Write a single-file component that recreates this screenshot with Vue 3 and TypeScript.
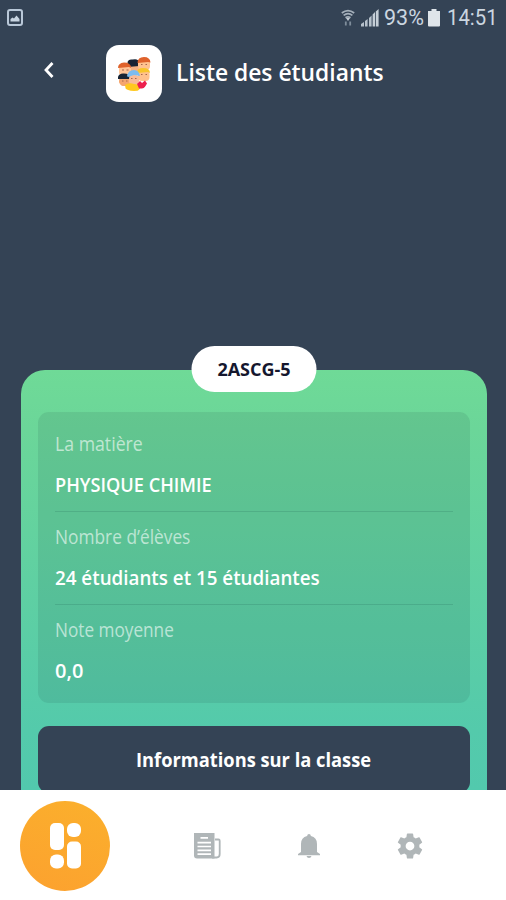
<script setup lang="ts">
import type { Directive } from 'vue'

interface Detail {
  label: string
  value: string
  labelWidth: number
  valueWidth: number
}

const details: Detail[] = [
  { label: 'La matière', value: 'PHYSIQUE CHIMIE', labelWidth: 88, valueWidth: 157 },
  { label: 'Nombre d’élèves', value: '24 étudiants et 15 étudiantes', labelWidth: 135, valueWidth: 265 },
  { label: 'Note moyenne', value: '0,0', labelWidth: 119, valueWidth: 28 },
]

/* Condenses or widens a line of text to the given width in pixels. */
const vFit: Directive<HTMLElement, number> = {
  mounted(el, { value }) {
    el.style.transform = `scaleX(${value / el.offsetWidth})`
  },
}
</script>

<template>
  <div class="screen">
    <div class="status">
      <svg class="shot" width="16" height="17" viewBox="0 0 16 17">
        <rect x="1" y="1" width="14" height="15" rx="2" fill="none" stroke="#b9c8d8" stroke-width="2" />
        <path d="M3.5 12.5V10l2-1.5 1.5 1 2.5-3 3 3.500v2.500z" fill="#c8d5e2" />
      </svg>
      <svg class="wifi" width="14" height="18" viewBox="0 0 14 18">
        <g fill="none" stroke="#a5b0bb" stroke-width="1.700">
          <path d="M.8 4Q7-.8 13.200 4" />
          <path d="M2.600 6.400Q7 3 11.400 6.400" />
          <path d="M4.500 8.800Q7 7 9.500 8.800" />
        </g>
        <path d="M5 9h4L7 12z" fill="#c3ccd4" />
        <path d="M4.800 12.500v4M9.200 12.500v4" stroke="#7f8d9b" stroke-width="1.800" />
      </svg>
      <svg class="signal" width="18" height="18" viewBox="0 0 18 18">
        <path d="M0 17.500v-2.500l3-2v4.500zM4 17.500v-5.500l2.600-2v7.500zM8 17.500V9l2.600-2.500v11z" fill="#b6c1cb" />
        <path d="M11.600 17.500V5.500L14 3v14.500zM14.800 17.500V2.500L17.600 0v17.500z" fill="#c5ced6" />
      </svg>
      <span class="percent"><span v-fit="40" class="fit">93%</span></span>
      <svg class="battery" width="12" height="18" viewBox="0 0 12 18">
        <path d="M3.500 0h5v2H12v14.500q0 1-1 1H1q-1 0-1-1V2h3.500z" fill="#dfe5ea" />
      </svg>
      <span v-fit="51" class="fit">14:51</span>
    </div>

    <header class="header">
      <svg class="back" width="12" height="18" viewBox="0 0 12 18">
        <path d="M10.500 2 4 9l6.500 7" fill="none" stroke="#fff" stroke-width="2.800" />
      </svg>
      <div class="avatar">
        <svg width="34" height="34" viewBox="0 0 34 34">
          <defs>
            <clipPath id="crowd">
              <path d="M0 0h34v18a16 15 0 0 1-34 0z" />
            </clipPath>
          </defs>
          <g clip-path="url(#crowd)">
            <rect x="11" y="4" width="12" height="14" rx="4" fill="#f4b183" />
            <path d="M10.500 10V6q0-4 5-3.500 6-1.500 7 3.500v3z" fill="#172334" />
            <rect x="21" y="2" width="12" height="11" rx="4" fill="#ffc28f" />
            <path d="M20.500 6q0-6 6.500-6 6 0 6.500 5.500L31 5z" fill="#df622c" />
            <rect x="2" y="8" width="12" height="11" rx="4" fill="#ffc497" />
            <path d="M1 11q0-5 6-5.500 7 0 7 5.500l-2-1z" fill="#df622c" />
            <rect x="21" y="13" width="11.500" height="11" rx="4" fill="#ffc18c" />
            <path d="M20 16q0-5 6-5 7 0 7 5l-2-1z" fill="#f7c52b" />
            <rect x="2" y="20" width="12" height="9" rx="4" fill="#f5a66e" />
            <path d="M1 22v-2q1-4 6-3.500 6 0 6 5.500z" fill="#172334" />
            <rect x="12" y="18" width="10" height="10" rx="4" fill="#f9bc98" />
            <path d="M10 19q1-6 7-6 5 0 6 6l-6-1-6 2z" fill="#7bbcf0" />
            <path d="M8 28q4-3 9-1 5 0 7 3l-3 4H9z" fill="#ffc91f" />
            <path d="m20 27 3-3 2 2 3-2.500 2 3-3 5h-5z" fill="#ed214e" />
            <path d="M5 13h2M9.500 13h2M24 7.500h1.500M28.500 7.500H30M24 17.500h1.500M28.500 17.500H30M5 24h1.500M9 24h1.500M14 21.500h1.500M18 21.500h1.500" stroke="#a5664c" stroke-width="1" />
          </g>
        </svg>
      </div>
      <h1 class="title"><span v-fit="208" class="fit">Liste des étudiants</span></h1>
    </header>

    <main class="content">
      <section class="card">
        <div class="badge"><span v-fit="73" class="fit centered">2ASCG-5</span></div>
        <dl class="panel">
          <div v-for="item in details" :key="item.label" class="row">
            <dt><span v-fit="item.labelWidth" class="fit">{{ item.label }}</span></dt>
            <dd><span v-fit="item.valueWidth" class="fit">{{ item.value }}</span></dd>
          </div>
        </dl>
        <button class="action" type="button">
          <span v-fit="235" class="fit centered">Informations sur la classe</span>
        </button>
      </section>
    </main>

    <nav class="nav">
      <div class="home">
        <svg width="31" height="46" viewBox="0 0 31 46" fill="#fff">
          <rect x="0" y="0" width="14" height="27" rx="5" />
          <rect x="17" y="0" width="14" height="14" rx="6" />
          <rect x="0" y="31.500" width="14" height="14" rx="6" />
          <rect x="17" y="18.500" width="14" height="27" rx="5" />
        </svg>
      </div>
      <svg class="news" width="27" height="26" viewBox="0 0 27 26">
        <path d="M0 0h20.500v25.500H3q-3 0-3-3z" fill="#b0b6b8" />
        <path d="M21 6.500h3.500q1.200 0 1.200 1.200V21q0 3.500-3 3.500H18" fill="none" stroke="#b0b6b8" stroke-width="1.800" />
        <path d="M6.500 4.800h7.500M3.500 9.700h13.500M3.500 13.500h13.500M3.500 17.300h13.500M3.500 21.100h13.500" stroke="#fff" stroke-width="1.700" />
      </svg>
      <svg class="bell" width="22" height="24" viewBox="0 0 22 24" fill="#b0b6b8">
        <path d="M11 0q1.700 0 1.900 2.100Q19 3.500 19 10v8l3 2v1.200H0V20l3-2v-8q0-6.500 6.100-7.900Q9.300 0 11 0z" />
        <path d="M8.500 22h5q-.5 2-2.500 2t-2.500-2z" />
      </svg>
      <svg class="gear" width="30" height="30" viewBox="0 0 24 24" fill="#b0b6b8">
        <path d="M19.430 12.980c.04-.32.07-.64.07-.98s-.03-.66-.07-.98l2.110-1.650c.19-.15.24-.42.12-.64l-2-3.460c-.12-.22-.39-.3-.61-.22l-2.490 1c-.52-.4-1.080-.73-1.690-.98l-.38-2.650C14.460 2.180 14.250 2 14 2h-4c-.25 0-.46.18-.49.42l-.38 2.650c-.61.25-1.170.59-1.690.98l-2.490-1c-.23-.09-.49 0-.61.22l-2 3.460c-.13.22-.07.49.12.64l2.110 1.650c-.04.32-.07.65-.07.98s.03.66.07.98l-2.110 1.650c-.19.15-.24.42-.12.64l2 3.460c.12.22.39.3.61.22l2.490-1c.52.4 1.080.73 1.690.98l.38 2.650c.03.24.24.42.49.42h4c.25 0 .46-.18.49-.42l.38-2.650c.61-.25 1.170-.59 1.690-.98l2.490 1c.23.09.49 0 .61-.22l2-3.460c.12-.22.07-.49-.12-.64l-2.110-1.650zM12 15.500a3.500 3.500 0 1 1 0-7 3.500 3.500 0 0 1 0 7z" />
      </svg>
    </nav>
  </div>
</template>

<style>
body {
  margin: 0;
  background: #344355;
}
</style>

<style scoped>
.screen {
  display: flex;
  flex-direction: column;
  width: 506px;
  height: 900px;
  overflow: hidden;
  background: #344355;
  font-family: 'Open Sans', 'Noto Sans', sans-serif;
  color: #fff;
}

.fit {
  display: inline-block;
  white-space: nowrap;
  transform-origin: left center;
}

.fit.centered {
  transform-origin: center;
}

.status {
  display: flex;
  align-items: center;
  box-sizing: border-box;
  flex: none;
  height: 36px;
  padding-left: 7px;
  font: 21.500px/36px Roboto, sans-serif;
  color: #cbd6e0;
}

.shot {
  margin-top: -2px;
}

.wifi {
  margin-left: 318px;
}

.signal {
  margin-left: 6px;
}

.percent {
  width: 43px;
  margin-left: 5px;
}

.battery {
  margin: 0 7px 0 1px;
}

.header {
  display: flex;
  align-items: center;
  flex: none;
  height: 57px;
  padding: 9px 0 0 42px;
}

.back {
  margin-top: -7px;
}

.avatar {
  display: grid;
  place-items: center;
  width: 56px;
  height: 57px;
  margin-left: 52px;
  border-radius: 13px;
  background: #fff;
}

.title {
  margin: -2px 0 0 14px;
  font-size: 22.500px;
  font-weight: 600;
  line-height: 30px;
}

.content {
  flex: 1;
  min-height: 0;
  overflow: hidden;
  padding: 268px 19px 0 21px;
}

.card {
  position: relative;
  box-sizing: border-box;
  height: 460px;
  padding: 42px 17px 0;
  border-radius: 24px 24px 0 0;
  background: linear-gradient(180deg, #6fda97 0, #6bd699 60px, #54caab 360px, #52c9ad 420px);
}

.badge {
  position: absolute;
  top: -24px;
  left: 50%;
  display: grid;
  place-items: center;
  width: 125px;
  height: 46px;
  border-radius: 23px;
  background: #fff;
  color: #15172e;
  font-size: 18px;
  font-weight: 700;
  line-height: 45px;
  transform: translateX(-50%);
}

.panel {
  box-sizing: border-box;
  height: 291px;
  margin: 0;
  padding: 7px 17px 0;
  border-radius: 11px;
  background: rgba(30, 60, 60, 0.11);
}

.row {
  padding: 13px 0 14px;
  border-bottom: 1px solid rgba(30, 90, 80, 0.18);
}

.row:last-child {
  border-bottom: 0;
}

dt {
  height: 24px;
  font-size: 19.500px;
  font-weight: 400;
  line-height: 24px;
  color: rgba(255, 255, 255, 0.6);
}

dd {
  height: 24px;
  margin: 17px 0 0;
  font-size: 20px;
  font-weight: 600;
  line-height: 24px;
}

.action {
  display: grid;
  place-items: center;
  width: 100%;
  height: 67px;
  margin-top: 23px;
  padding: 0;
  border: 0;
  border-radius: 11px;
  background: #344355;
  color: #fff;
  font: 700 20px/67px 'Open Sans', 'Noto Sans', sans-serif;
}

.nav {
  display: flex;
  align-items: center;
  flex: none;
  box-sizing: border-box;
  height: 110px;
  padding: 1px 0 0 20px;
  background: #fff;
}

.home {
  display: grid;
  place-items: center;
  width: 90px;
  height: 90px;
  border-radius: 50%;
  background: linear-gradient(200deg, #fbb02c, #fca12f);
}

.news {
  margin-left: 84px;
}

.bell {
  margin-left: 77px;
}

.gear {
  margin-left: 75px;
}
</style>
